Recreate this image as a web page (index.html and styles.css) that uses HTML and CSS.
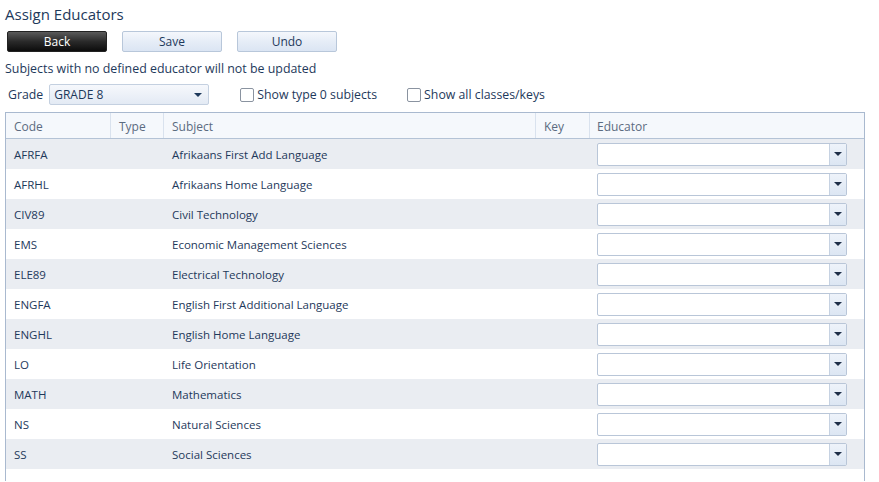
FILE: index.html
```html
<!DOCTYPE html>
<html>
<head>
<meta charset="utf-8">
<link rel="stylesheet" href="styles.css">
</head>
<body>
<div class="page">
  <h1 class="title">Assign Educators</h1>
  <div class="toolbar">
    <button class="btn btn-dark">Back</button>
    <button class="btn">Save</button>
    <button class="btn">Undo</button>
  </div>
  <div class="note">Subjects with no defined educator will not be updated</div>
  <div class="filters">
    <span class="lbl">Grade</span>
    <div class="select grade"><span class="val">GRADE 8</span><span class="arrow"></span></div>
    <label class="chk c1"><span class="box"></span>Show type 0 subjects</label>
    <label class="chk c2"><span class="box"></span>Show all classes/keys</label>
  </div>
  <div class="grid">
    <div class="row head">
      <div class="cell code">Code</div>
      <div class="cell type">Type</div>
      <div class="cell subj">Subject</div>
      <div class="cell key">Key</div>
      <div class="cell edu">Educator</div>
    </div>
    <div class="row alt"><div class="cell code">AFRFA</div><div class="cell type"></div><div class="cell subj">Afrikaans First Add Language</div><div class="cell key"></div><div class="cell edu"><div class="combo"><span class="drop"><span class="arrow"></span></span></div></div></div>
    <div class="row"><div class="cell code">AFRHL</div><div class="cell type"></div><div class="cell subj">Afrikaans Home Language</div><div class="cell key"></div><div class="cell edu"><div class="combo"><span class="drop"><span class="arrow"></span></span></div></div></div>
    <div class="row alt"><div class="cell code">CIV89</div><div class="cell type"></div><div class="cell subj">Civil Technology</div><div class="cell key"></div><div class="cell edu"><div class="combo"><span class="drop"><span class="arrow"></span></span></div></div></div>
    <div class="row"><div class="cell code">EMS</div><div class="cell type"></div><div class="cell subj">Economic Management Sciences</div><div class="cell key"></div><div class="cell edu"><div class="combo"><span class="drop"><span class="arrow"></span></span></div></div></div>
    <div class="row alt"><div class="cell code">ELE89</div><div class="cell type"></div><div class="cell subj">Electrical Technology</div><div class="cell key"></div><div class="cell edu"><div class="combo"><span class="drop"><span class="arrow"></span></span></div></div></div>
    <div class="row"><div class="cell code">ENGFA</div><div class="cell type"></div><div class="cell subj">English First Additional Language</div><div class="cell key"></div><div class="cell edu"><div class="combo"><span class="drop"><span class="arrow"></span></span></div></div></div>
    <div class="row alt"><div class="cell code">ENGHL</div><div class="cell type"></div><div class="cell subj">English Home Language</div><div class="cell key"></div><div class="cell edu"><div class="combo"><span class="drop"><span class="arrow"></span></span></div></div></div>
    <div class="row"><div class="cell code">LO</div><div class="cell type"></div><div class="cell subj">Life Orientation</div><div class="cell key"></div><div class="cell edu"><div class="combo"><span class="drop"><span class="arrow"></span></span></div></div></div>
    <div class="row alt"><div class="cell code">MATH</div><div class="cell type"></div><div class="cell subj">Mathematics</div><div class="cell key"></div><div class="cell edu"><div class="combo"><span class="drop"><span class="arrow"></span></span></div></div></div>
    <div class="row"><div class="cell code">NS</div><div class="cell type"></div><div class="cell subj">Natural Sciences</div><div class="cell key"></div><div class="cell edu"><div class="combo"><span class="drop"><span class="arrow"></span></span></div></div></div>
    <div class="row alt"><div class="cell code">SS</div><div class="cell type"></div><div class="cell subj">Social Sciences</div><div class="cell key"></div><div class="cell edu"><div class="combo"><span class="drop"><span class="arrow"></span></span></div></div></div>
  </div>
</div>
</body>
</html>
```
FILE: styles.css
```css
html, body {
  margin: 0;
  padding: 0;
  background: #fff;
}
body {
  font-family: "Open Sans", "Noto Sans", sans-serif;
  font-size: 12px;
  color: #1e395b;
  height: 482px;
  overflow: hidden;
}
.page {
  padding: 3px 0 0 0;
}
.title {
  margin: 0 0 0 5px;
  font-size: 15px;
  font-weight: normal;
  line-height: 22px;
  color: #1e395b;
}
.toolbar {
  display: flex;
  gap: 15px;
  margin: 6px 0 0 7px;
}
.btn {
  width: 100px;
  height: 21px;
  padding: 0;
  font-family: inherit;
  font-size: 12px;
  color: #1e395b;
  border: 1px solid #b8c7da;
  border-radius: 2px;
  background: linear-gradient(#f4f7fc, #e6edf7 50%, #dbe5f3);
}
.btn-dark {
  color: #fff;
  border-color: #222;
  background: linear-gradient(#5a5a5a, #2a2a2a 50%, #0c0c0c);
}
.note {
  margin: 8px 0 0 5px;
  line-height: 18px;
  font-size: 12.4px;
}
.filters {
  display: flex;
  align-items: center;
  margin: 6px 0 0 8px;
  height: 21px;
  font-size: 12.3px;
}
.lbl {
  margin-right: 6px;
}
.select {
  width: 158px;
  height: 19px;
  border: 1px solid #c4d0e0;
  border-radius: 2px;
  background: linear-gradient(#f6f8fc, #e3eaf4);
  display: flex;
  align-items: center;
  font-size: 12px;
}
.select .val {
  padding-left: 4px;
  flex: 1;
}
.arrow {
  display: block;
  width: 0;
  height: 0;
  border-left: 4px solid transparent;
  border-right: 4px solid transparent;
  border-top: 4px solid #1e395b;
}
.select .arrow {
  margin-right: 6px;
}
.chk {
  display: flex;
  align-items: center;
}
.c1 { margin-left: 31px; }
.c2 { margin-left: 30px; }
.box {
  width: 12px;
  height: 12px;
  border: 1px solid #8a93a0;
  border-radius: 2px;
  background: #fff;
  margin-right: 3px;
}
.grid {
  margin: 7px 0 0 5px;
  width: 858px;
  height: 368px;
  border: 1px solid #a9b9cf;
  border-bottom: none;
  font-size: 11.5px;
}
.row {
  display: flex;
  height: 30px;
  align-items: center;
}
.row.alt {
  background: #eaedf2;
}
.row.head {
  height: 25px;
  background: #f5f8fc;
  border-bottom: 1px solid #b4c3d6;
  color: #5b6b80;
  font-size: 12px;
}
.cell {
  box-sizing: border-box;
  height: 100%;
  display: flex;
  align-items: center;
  padding-left: 8px;
  white-space: nowrap;
}
.head .cell {
  border-right: 1px solid #d9e2ee;
  padding-top: 1px;
}
.head .cell.edu { border-right: none; }
.code { width: 105px; }
.type { width: 53px; }
.subj { width: 372px; }
.key { width: 54px; }
.edu { flex: 1; }
.row .cell.edu { padding-left: 7px; }
.combo {
  box-sizing: border-box;
  width: 250px;
  height: 23px;
  border: 1px solid #b9c6d8;
  border-radius: 2px;
  background: #fff;
  display: flex;
  justify-content: flex-end;
}
.drop {
  width: 16px;
  height: 100%;
  border-left: 1px solid #c6d2e2;
  background: linear-gradient(#eef3fa, #dce6f3);
  display: flex;
  align-items: center;
  justify-content: center;
}
.drop .arrow {
  border-top-color: #1e2e48;
}
```
